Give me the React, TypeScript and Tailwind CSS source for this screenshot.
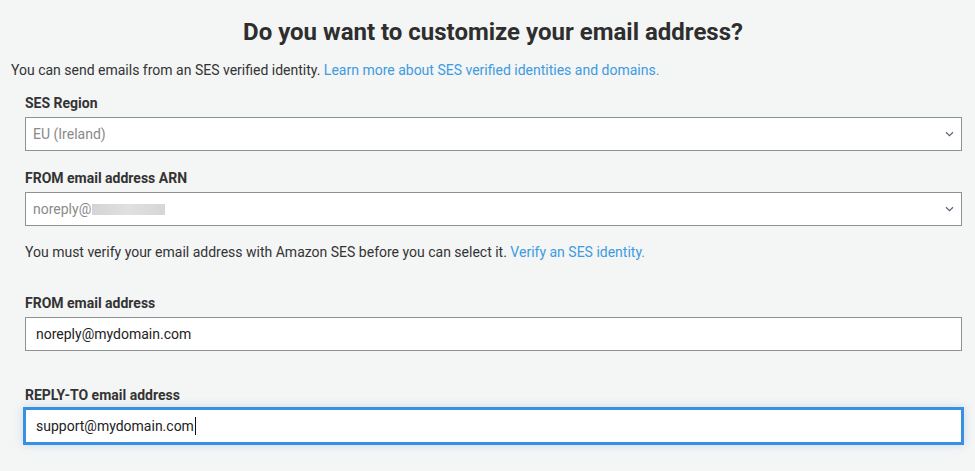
import { useState } from "react";

const regions = ["EU (Ireland)", "US East (N. Virginia)", "US West (Oregon)"];

function Chevron() {
  return (
    <svg width="9" height="6" viewBox="0 0 9 6" className="shrink-0">
      <path d="M1 1.2 L4.5 4.6 L8 1.2" fill="none" stroke="#5a6478" strokeWidth="1.2" />
    </svg>
  );
}

function Field({ label, children }: { label: string; children: React.ReactNode }) {
  return (
    <div>
      <div className="text-[14px] leading-5 font-bold text-[#333] mb-1">{label}</div>
      {children}
    </div>
  );
}

export default function App() {
  const [region] = useState(regions[0]);
  const [fromEmail] = useState("noreply@mydomain.com");
  const [replyTo] = useState("support@mydomain.com");

  return (
    <div
      className="min-h-[471px] bg-[#f4f5f5] pl-[11px] pt-4 text-[#333]"
      style={{ fontFamily: "Roboto, 'Liberation Sans', sans-serif" }}
    >
      <h1 className="text-center text-[24px] leading-8 font-bold text-[#2e2e2e]">
        Do you want to customize your email address?
      </h1>

      <p className="mt-3 text-[14px] leading-5">
        You can send emails from an SES verified identity.{" "}
        <a href="#" className="text-[#3d9be0]">
          Learn more about SES verified identities and domains.
        </a>
      </p>

      <div className="ml-[14px] mr-[13px] mt-[13px] flex flex-col">
        <Field label="SES Region">
          <div className="flex h-[34px] items-center justify-between border border-[#8d9393] bg-white pl-[7px] pr-[7px]">
            <span className="text-[14px] text-[#8a8a8a]">{region}</span>
            <Chevron />
          </div>
        </Field>

        <div className="mt-[17px]">
          <Field label="FROM email address ARN">
            <div className="flex h-[34px] items-center justify-between border border-[#8d9393] bg-white pl-[7px] pr-[7px]">
              <span className="flex items-center text-[14px] text-[#8a8a8a]">
                noreply@
                <span className="ml-[1px] inline-block h-[11px] w-[73px] bg-gradient-to-r from-[#d4d4d4] via-[#e0e0e0] to-[#d6d6d6]" />
              </span>
              <Chevron />
            </div>
          </Field>
        </div>

        <p className="mt-4 text-[14px] leading-5">
          You must verify your email address with Amazon SES before you can select it.{" "}
          <a href="#" className="text-[#3d9be0]">
            Verify an SES identity.
          </a>
        </p>

        <div className="mt-[31px]">
          <Field label="FROM email address">
            <div className="flex h-[34px] items-center border border-[#8d9393] bg-white px-[10px] text-[14px] text-[#222]">
              {fromEmail}
            </div>
          </Field>
        </div>

        <div className="mt-[34px]">
          <Field label="REPLY-TO email address">
            <div className="mt-[3px] flex h-[34px] items-center border border-[#3b8fe0] bg-white px-[10px] text-[14px] text-[#222] shadow-[0_0_0_2px_#3b8fe0,0_0_8px_2px_rgba(59,143,224,0.25)]">
              {replyTo}
              <span className="ml-[1px] inline-block h-[18px] w-px bg-[#111]" />
            </div>
          </Field>
        </div>
      </div>
    </div>
  );
}
